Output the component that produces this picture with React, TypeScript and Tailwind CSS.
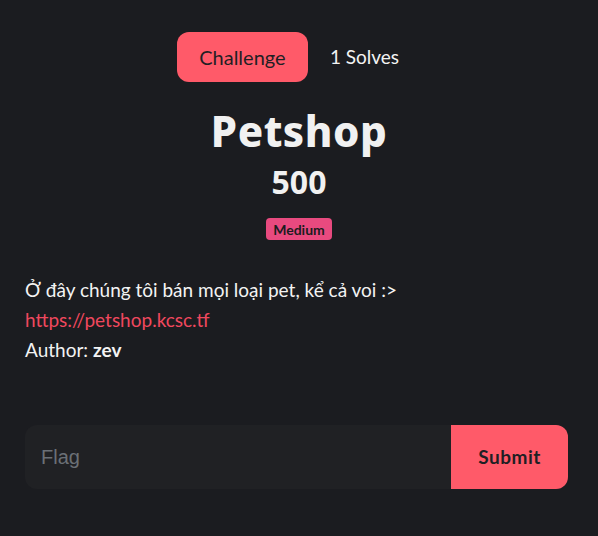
import { useState } from 'react';

export default function App() {
    const [tab, setTab] = useState<'challenge' | 'solves'>('challenge');

    return (
        <div className="min-h-[536px] w-full bg-[#1b1c20] text-[#f3f3f3] font-['Lato','Noto_Sans',sans-serif]">
            {/* Tabs */}
            <div className="flex justify-center items-center pt-[32px]">
                <button
                    onClick={() => setTab('challenge')}
                    className={`h-[50px] w-[131px] rounded-[12px] text-[20px] ${tab === 'challenge' ? 'bg-[#ff5a69] text-[#1f1f24]' : 'text-[#f3f3f3]'}`}
                >
                    Challenge
                </button>
                <button
                    onClick={() => setTab('solves')}
                    className={`h-[50px] px-[22px] rounded-[12px] text-[19px] ${tab === 'solves' ? 'bg-[#ff5a69] text-[#1f1f24]' : 'text-[#f3f3f3]'}`}
                >
                    1 Solves
                </button>
            </div>

            {/* Header */}
            <div className="flex flex-col items-center mt-[24px]">
                <h1 className="text-[42px] leading-[50px] font-extrabold tracking-[0.5px] font-['Noto_Sans',sans-serif] text-[#f1f1f1]">
                    Petshop
                </h1>
                <div className="text-[32px] leading-[38px] font-bold mt-[7px] font-['Noto_Sans',sans-serif] text-[#f1f1f1]">500</div>
                <span className="mt-[17px] px-[7px] h-[22px] flex items-center rounded-[4px] bg-[#e84a7f] text-[#1b1c20] text-[14px] font-bold">
                    Medium
                </span>
            </div>

            {/* Description */}
            <div className="px-[25px] mt-[35px] text-[19px] leading-[30px]">
                <p>Ở đây chúng tôi bán mọi loại pet, kể cả voi :&gt;</p>
                <a href="#" className="text-[#f0485e] block">https://petshop.kcsc.tf</a>
                <p>
                    Author: <strong className="font-bold">zev</strong>
                </p>
            </div>

            {/* Flag form */}
            <form className="ml-[25px] mr-[30px] mt-[60px] flex h-[64px] rounded-[12px] overflow-hidden bg-[#202124]" onSubmit={e => e.preventDefault()}>
                <input
                    placeholder="Flag"
                    className="flex-1 min-w-0 bg-transparent px-[16px] text-[20px] font-['Liberation_Sans',sans-serif] text-white placeholder-[#6b7076] outline-none"
                />
                <button type="submit" className="w-[117px] bg-[#ff5a69] text-[#1f1f24] text-[19px] font-bold tracking-[0.5px]">
                    Submit
                </button>
            </form>
        </div>
    );
}
